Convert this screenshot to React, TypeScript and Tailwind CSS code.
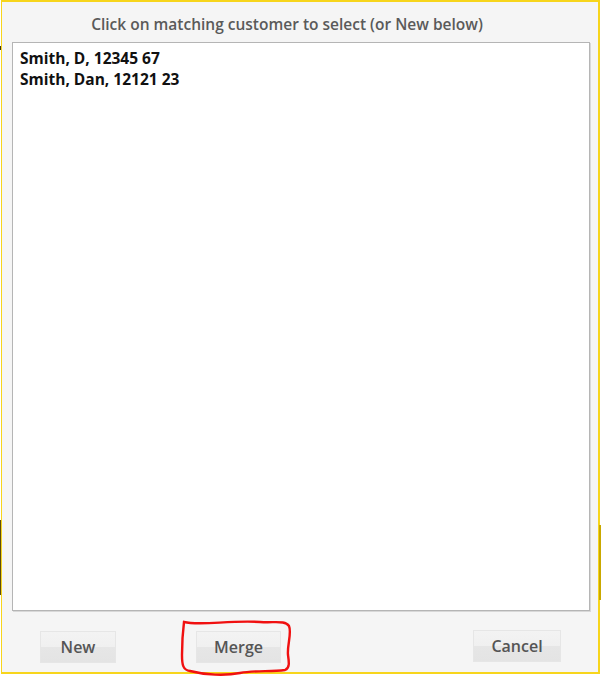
import React from "react";

const customers = ["Smith, D, 12345 67", "Smith, Dan, 12121 23"];

function DlgButton({ label, className }: { label: string; className: string }) {
    return (
        <button
            className={`h-[32px] border border-[#e6e6e6] bg-[linear-gradient(#f3f3f3_0%,#f0f0f0_50%,#e6e6e6_50%,#e4e4e4_100%)] text-[16px] font-semibold text-[#555] ${className}`}
        >
            {label}
        </button>
    );
}

export default function App() {
    return (
        <div className="relative w-[601px] h-[678px] bg-white font-['Open_Sans',sans-serif]">
            {/* bits of the window behind */}
            <div className="absolute left-0 top-[46px] w-px h-[4px] bg-[#3a3520]" />
            <div className="absolute left-0 top-[520px] w-px h-[75px] bg-[#5a4a10]" />
            <div className="absolute right-0 top-[525px] w-[2px] h-[75px] bg-[#c9a800]" />

            <div className="ml-px w-[599px] h-[674px] flex flex-col bg-[#f5f5f5] border-t-2 border-l border-r-2 border-b-2 border-[#f7d51c]">
                <div className="h-[40px] flex items-center justify-center text-[15.5px] font-semibold text-[#5a5a5a] pt-[5px] pr-[26px]">
                    Click on matching customer to select (or New below)
                </div>
                <div className="ml-[10px] w-[578px] h-[569px] bg-white border border-[#b5b5b5] shadow-[1px_1px_0_#d8d8d8] pl-[7px] pt-[5px]">
                    {customers.map(c => (
                        <div key={c} className="h-[21px] leading-[21px] text-[15.5px] font-bold text-[#111]">
                            {c}
                        </div>
                    ))}
                </div>
                <div className="flex items-start mt-[19px]">
                    <DlgButton label="New" className="ml-[38px] mt-[1px] w-[76px]" />
                    <DlgButton label="Merge" className="ml-[80px] mt-[1px] w-[85px]" />
                    <DlgButton label="Cancel" className="ml-[192px] w-[88px]" />
                </div>
            </div>

            {/* red hand-drawn highlight */}
            <svg className="absolute left-0 top-0 pointer-events-none" width="601" height="678">
                <path
                    d="M184,622 C200,626 230,620 260,622 C275,623 285,620 289,626 C292,633 287,645 288,655 C289,662 290,668 285,670 C270,672 255,670 240,673 C225,676 205,675 190,671 C183,670 182,665 182,655 C182,645 183,630 184,622 Z"
                    fill="none"
                    stroke="#f01010"
                    strokeWidth="2.4"
                />
            </svg>
        </div>
    );
}
